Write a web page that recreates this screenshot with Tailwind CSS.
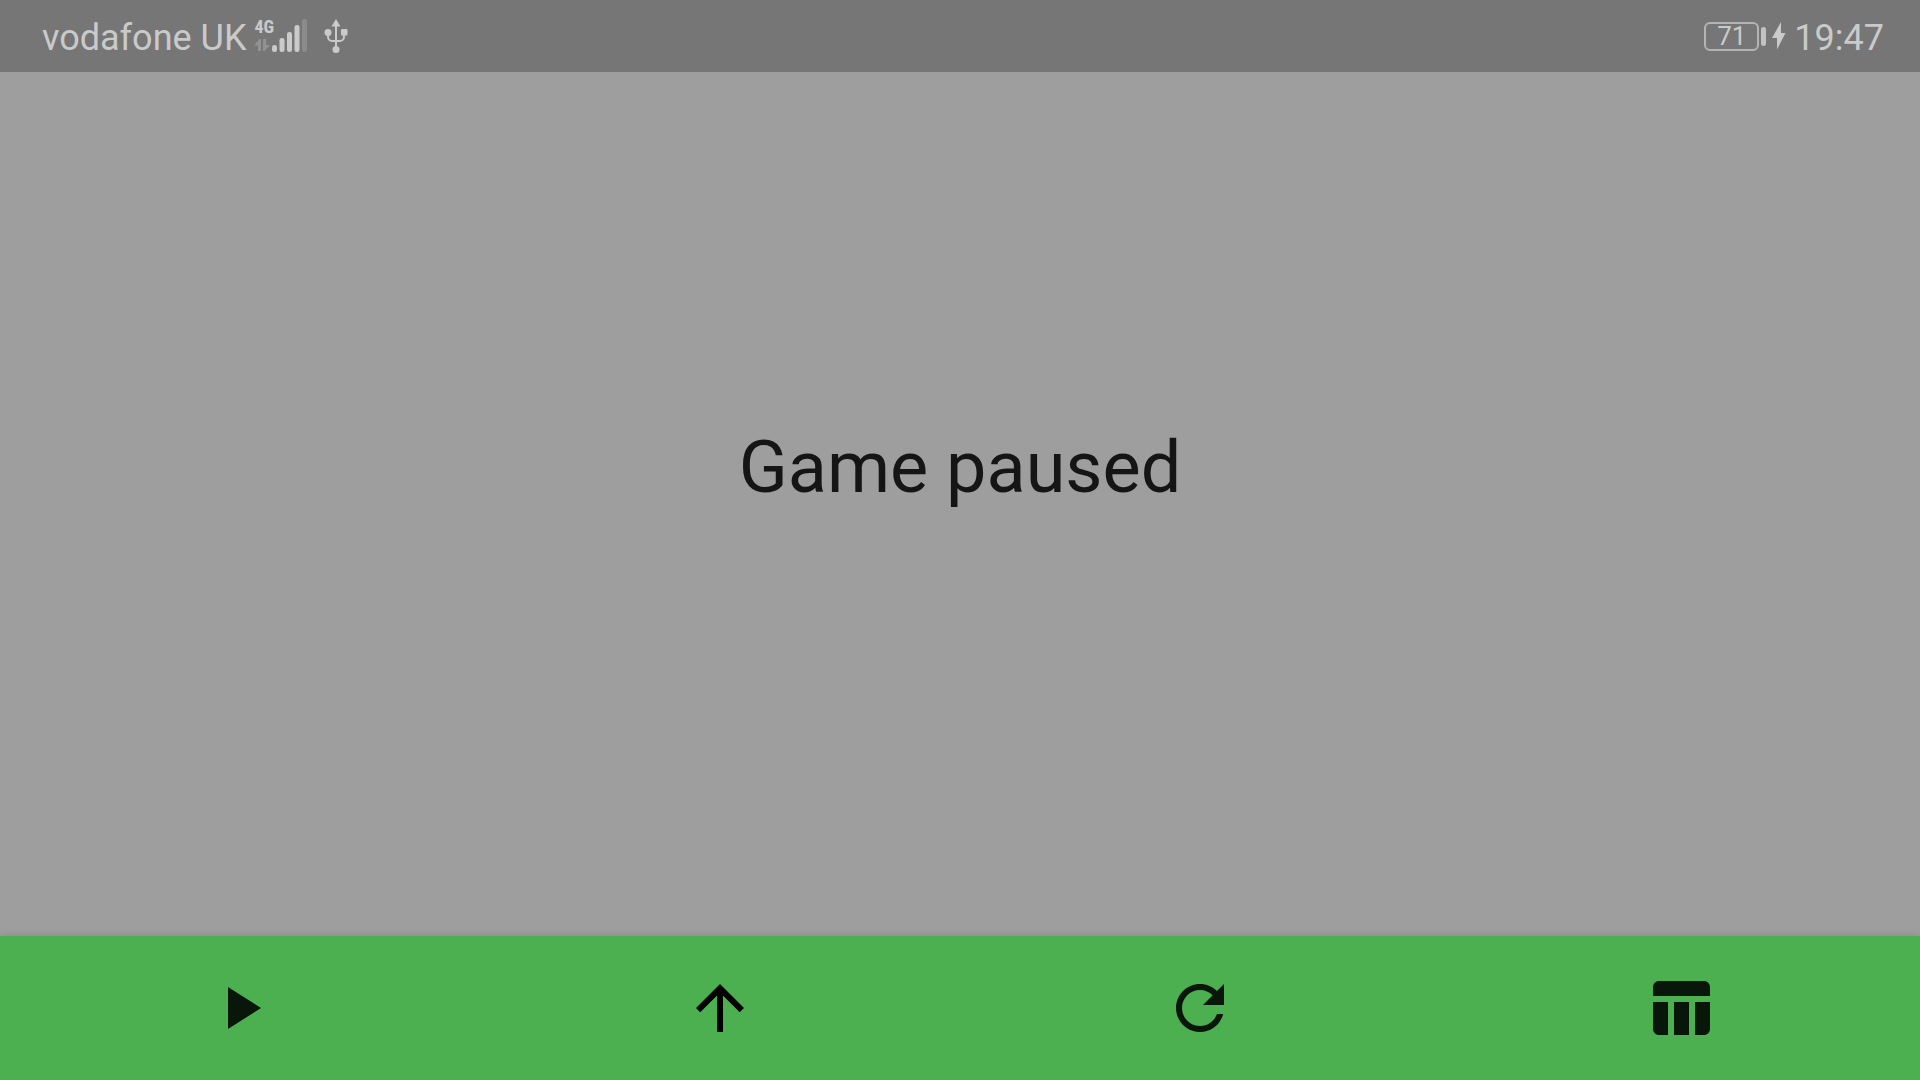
<!DOCTYPE html>
<html lang="en">
<head>
<meta charset="utf-8">
<title>Game paused</title>
<script src="https://cdn.jsdelivr.net/npm/@tailwindcss/browser@4"></script>
</head>
<body class="flex min-h-screen flex-col bg-[#9e9e9e] font-['Roboto',sans-serif]">
<header class="flex h-18 shrink-0 items-center justify-between bg-[#767676] pr-9 pl-[42px] text-4xl text-[#cacaca]">
  <div class="flex items-center">
    <span class="pt-1 whitespace-nowrap">vodafone UK</span>
    <div class="ml-2 flex h-[34px] items-end" role="img" aria-label="4G signal">
      <div class="flex w-[18px] flex-col gap-1">
        <span class="font-['Roboto_Condensed','Liberation_Sans_Narrow','Roboto',sans-serif] text-lg leading-4 font-bold">4G</span>
        <svg class="h-[14px] w-[17px]" viewBox="0 0 17 14" fill="#929292"><path d="M0 6.500 5.500 0H7v12H4V6.500zM9 0h3v6h4l-5.500 6H9z"/></svg>
      </div>
      <svg class="h-[34px] w-9" viewBox="0 0 36 34" fill="currentColor"><rect y="26" width="5" height="7" rx="2.200"/><rect x="7.500" y="19" width="5" height="14" rx="2.200"/><rect x="15" y="13" width="5" height="20" rx="2.200"/><rect x="22.500" y="6" width="5" height="27" rx="2.200"/><rect x="30" width="5" height="33" rx="2.200" fill="#8b8b8b"/></svg>
    </div>
    <svg class="ml-4 h-9 w-6" viewBox="0 0 24 36" role="img" aria-label="USB connected"><path d="M12 5v26M4 13v5.500c0 3 2 4.500 4 4.500h8c2 0 4-1.500 4-4.500V13" fill="none" stroke="currentColor" stroke-width="2"/><path d="M12 1l4.500 7.500h-9z" fill="currentColor"/><rect x="17" y="11" width="6.500" height="6.500" rx="1" fill="currentColor"/><circle cx="4" cy="14.500" r="3.500" fill="currentColor"/><circle cx="12" cy="31.500" r="3.500" fill="currentColor"/></svg>
  </div>
  <div class="flex items-center">
    <div class="flex h-[29px] w-[55px] items-center justify-center rounded-md border-2 border-[#b4b4b4] text-[26px]">71</div>
    <div class="ml-[2px] h-[19px] w-[5px] rounded-sm bg-[#c2c2c2]"></div>
    <svg class="ml-[6px] h-7 w-[14px]" viewBox="0 0 14 28" fill="currentColor" role="img" aria-label="Charging"><path d="M9 0v11h4.500L5 27.500V16H0z"/></svg>
    <time class="ml-2 pt-1">19:47</time>
  </div>
</header>
<main class="flex flex-1 items-center justify-center pb-18">
  <h1 class="text-7xl text-[#151515]">Game paused</h1>
</main>
<nav class="grid h-36 shrink-0 grid-cols-4 bg-[#4caf50] text-[#09170a] shadow-[0_0_8px_rgba(0,0,0,0.15)]" aria-label="Game controls">
  <button class="flex items-center justify-center" aria-label="Resume"><svg class="size-18" viewBox="0 0 24 24" fill="currentColor"><path d="M8 5v14l11-7z"/></svg></button>
  <button class="flex items-center justify-center text-black" aria-label="Up"><svg class="size-18" viewBox="0 0 24 24" fill="currentColor"><path d="M4 12l1.410 1.410L11 7.830V20h2V7.830l5.580 5.590L20 12l-8-8-8 8z"/></svg></button>
  <button class="flex items-center justify-center" aria-label="Restart"><svg class="size-18" viewBox="0 0 24 24" fill="currentColor"><path d="M17.650 6.350C16.200 4.900 14.210 4 12 4c-4.420 0-7.990 3.580-7.990 8s3.570 8 7.990 8c3.730 0 6.840-2.550 7.730-6h-2.080c-.82 2.330-3.040 4-5.650 4-3.310 0-6-2.690-6-6s2.690-6 6-6c1.660 0 3.140.69 4.220 1.780L13 11h7V4l-2.350 2.350z"/></svg></button>
  <button class="flex items-center justify-center" aria-label="Scores"><svg class="size-18" viewBox="0 0 24 24" fill="currentColor"><path d="M10 10.020h5V21h-5V10.020zM17 21h3c1.100 0 2-.9 2-2v-9h-5v11zm3-18H5c-1.100 0-2 .9-2 2v3h19V5c0-1.100-.9-2-2-2zM3 19c0 1.100.9 2 2 2h3V10H3v9z"/></svg></button>
</nav>
</body>
</html>
